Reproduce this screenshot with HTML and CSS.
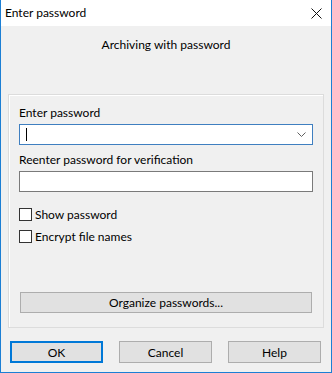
FILE: index.html
```html
<!DOCTYPE html>
<html>
<head>
  <title>Enter password</title>
  <link rel="stylesheet" href="styles.css">
</head>
<body>
  <div class="window">
    <div class="titlebar">
      <span class="title">Enter password</span>
      <svg class="close" width="11" height="11" viewBox="0 0 11 11">
        <path d="M0.5 0.5 L10.5 10.5 M10.5 0.5 L0.5 10.5" stroke="#111" stroke-width="1" fill="none"/>
      </svg>
    </div>
    <div class="content">
      <p class="heading">Archiving with password</p>
      <div class="group">
        <label class="label">Enter password</label>
        <div class="combo">
          <span class="caret"></span>
          <svg class="chevron" width="9" height="5" viewBox="0 0 9 5">
            <path d="M0.5 0.5 L4.5 4.5 L8.5 0.5" stroke="#606060" stroke-width="1" fill="none"/>
          </svg>
        </div>
        <label class="label spaced">Reenter password for verification</label>
        <div class="field"></div>
        <div class="checks">
          <div class="check-row"><span class="box"></span>Show password</div>
          <div class="check-row"><span class="box"></span>Encrypt file names</div>
        </div>
        <button class="btn wide">Organize passwords...</button>
      </div>
      <div class="actions">
        <button class="btn default">OK</button>
        <button class="btn">Cancel</button>
        <button class="btn">Help</button>
      </div>
    </div>
  </div>
</body>
</html>
```

FILE: styles.css
```css
body{
  margin: 0;
  font-family: Lato, "Noto Sans", sans-serif;
  font-size: 12px;
  color: #000;
  background-color: #f0f0f0;
}

.window{
  width: 332px;
  height: 373px;
  box-sizing: border-box;
  border: 1px solid #1c7fd4;
  border-top: none;
  background-color: #f0f0f0;
  display: flex;
  flex-direction: column;
}

.titlebar{
  height: 26px;
  background-color: #fff;
  display: flex;
  align-items: center;
  justify-content: space-between;
  padding: 0 9px 0 4px;
}

.title{
  font-size: 12px;
  line-height: 16px;
}

.content{
  flex: 1;
  display: flex;
  flex-direction: column;
}

.heading{
  margin: 11px 0 0;
  line-height: 16px;
  text-align: center;
}

.group{
  margin: 41px 7px 0 7px;
  height: 234px;
  box-sizing: border-box;
  border: 1px solid #dcdcdc;
  box-shadow: inset 1px 1px 0 #fff;
  padding: 10px 10px 14px 10px;
  display: flex;
  flex-direction: column;
}

.label{
  line-height: 16px;
}

.spaced{
  margin-top: 7px;
}

.combo,
.field{
  height: 21px;
  box-sizing: border-box;
  background-color: #fff;
  border: 1px solid #7a7a7a;
  margin-top: 3px;
}

.combo{
  border-color: #3f7fc0;
  display: flex;
  align-items: center;
  justify-content: space-between;
  padding: 0 6px 0 6px;
}

.caret{
  width: 1px;
  height: 13px;
  background-color: #000;
}

.checks{
  margin-top: 16px;
  display: flex;
  flex-direction: column;
  gap: 9px;
}

.check-row{
  display: flex;
  align-items: center;
  line-height: 13px;
}

.box{
  width: 13px;
  height: 13px;
  box-sizing: border-box;
  border: 1px solid #333;
  background-color: #fff;
  margin-right: 3px;
}

.btn{
  font-family: Lato, "Noto Sans", sans-serif;
  font-size: 12px;
  height: 21px;
  padding: 0;
  background-color: #e1e1e1;
  border: 1px solid #adadad;
  color: #000;
}

.wide{
  margin: auto 1px 0 1px;
}

.actions{
  display: flex;
  gap: 16px;
  margin: 13px 8px 0 9px;
}

.actions .btn{
  width: 93px;
  height: 22px;
}

.default{
  border: 2px solid #0078d7;
}
```
